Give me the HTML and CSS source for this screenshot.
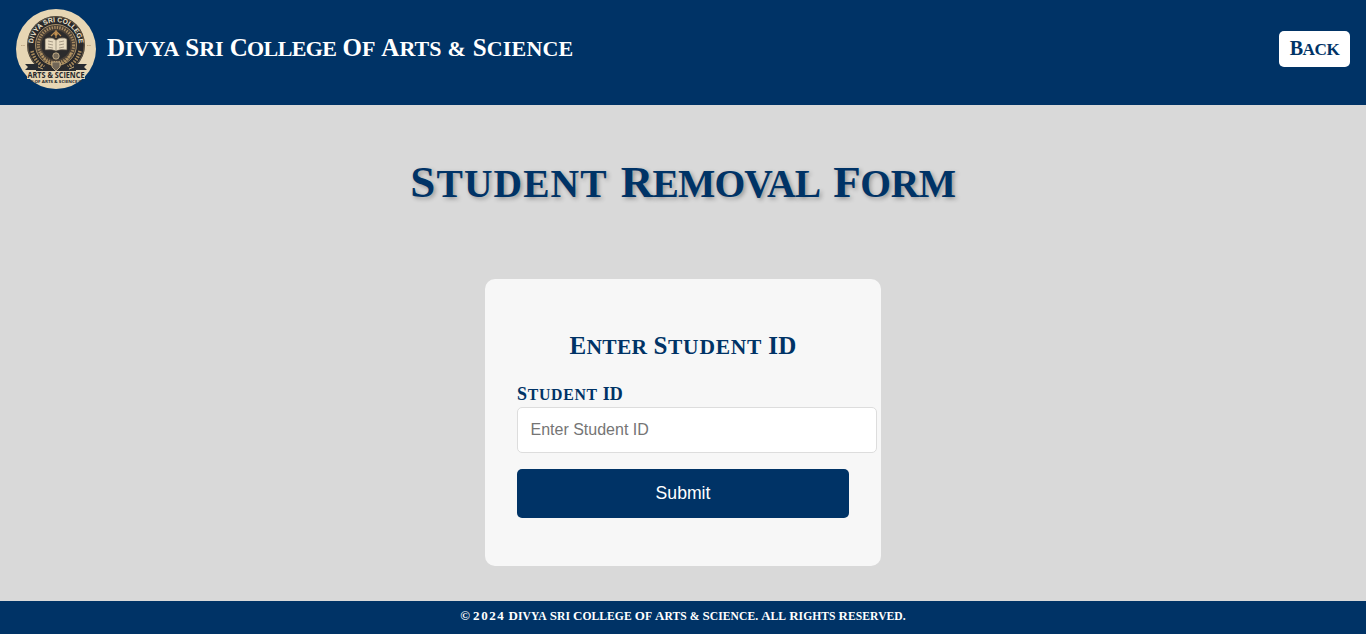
FILE: index.html
```html
<!DOCTYPE html>
<html lang="en">
<head>
<meta charset="utf-8">
<title>Student Removal Form</title>
<link rel="stylesheet" href="styles.css">
</head>
<body>
<header class="header">
  <div class="brand">
    <svg class="logo" viewBox="0 0 80 80" aria-label="College logo">
      <defs><path id="arc" d="M17.200 36a22.800 22.800 0 1 1 45.600 0"/></defs>
      <circle cx="40" cy="40" r="40" fill="#e7d6b4"/>
      <circle cx="40" cy="36" r="29" fill="#29292b"/>
      <circle cx="40" cy="36" r="20.500" fill="#4a4036" stroke="#c0a475" stroke-width=".8"/>
      <circle cx="40" cy="36" r="17.600" fill="none" stroke="#a78a60" stroke-width="3" stroke-dasharray="1.400 1.200"/>
      <circle cx="40" cy="36" r="14.500" fill="#2c2b2c"/>
      <path d="M16 42a25 25 0 0 0 12 16M64 42a25 25 0 0 1-12 16" stroke="#a98b5d" stroke-width="3.500" stroke-dasharray="1.500 1.300" fill="none"/>
      <circle cx="40" cy="36" r="28.200" fill="none" stroke="#a98b5d" stroke-width=".5"/>
      <text class="logo-arc"><textPath href="#arc" startOffset="50%">DIVYA SRI COLLEGE</textPath></text>
      <path d="M40 21v8M35 27l5-5 5 5" stroke="#b78b52" stroke-width="1.200" fill="none"/>
      <circle cx="40" cy="25" r="1.800" fill="#c59150"/>
      <path d="M29 30l2-1q6-1 9 2 3-3 9-2l2 1v11q-7-1-11 1-4-2-11-1z" fill="#e9dcc2" stroke="#51483d" stroke-width=".7"/>
      <path d="M40 31v11M32 32l5 1M32 35l5 1M32 38l5 1M48 32l-5 1M48 35l-5 1M48 38l-5 1" stroke="#8b7e6c" stroke-width=".7"/>
      <path d="M25 44q4 10 13 12M55 44q-4 10-13 12" stroke="#b29361" stroke-width="2.400" stroke-dasharray="2 1" fill="none"/>
      <circle cx="40" cy="47" r="3.200" fill="#766a59" stroke="#d6bd91" stroke-width=".8"/>
      <path d="M36 53h8v5l-4 4-4-4z" fill="#716657" stroke="#d0b78d" stroke-width=".8"/>
      <path d="M9 55h13v3h9v4H20v-1H9l3-3zM71 55H58v3h-9v4h11v-1h11l-3-3z" fill="#262a30"/>
      <path d="M22 58l5 2M58 58l-5 2" stroke="#c3a675"/>
      <path d="M11 62h58v8H11z" fill="#e7d6b4"/>
      <text class="logo-name" x="11.500" y="69.200" textLength="57" lengthAdjust="spacingAndGlyphs">ARTS &amp; SCIENCE</text>
      <text class="logo-sub" x="18.500" y="73.700" textLength="43" lengthAdjust="spacingAndGlyphs">OF ARTS &amp; SCIENCE</text>
      <path d="M14.500 72h3M62.500 72h3" stroke="#34302d"/>
      <path d="M5 36.500h4M71 36.500h4" stroke="#c0aa86" stroke-dasharray="1.600 .6"/>
    </svg>
    <div class="caps brand-name"><span>Divya</span> <span>Sri</span> <span class="w-college">College</span> <span>Of</span> <span>Arts</span> <span class="w-amp">&amp;</span> <span class="w-science">Science</span></div>
  </div>
  <a class="caps back"><span>Back</span></a>
</header>
<main class="main">
  <h1 class="caps title"><span class="w-student">Student</span> <span class="w-removal">Removal</span> <span class="w-form">Form</span></h1>
  <form class="card">
    <h2 class="caps card-title"><span>Enter</span> <span class="w-student">Student</span> <span class="full">ID</span></h2>
    <label class="caps label" for="sid"><span class="w-student">Student</span> <span class="full">ID</span></label>
    <input class="input" id="sid" type="text" placeholder="Enter Student ID">
    <button class="submit" type="button">Submit</button>
  </form>
</main>
<footer class="footer">
  <p class="caps copy"><span>©</span> <span class="full year">2024</span> <span>Divya</span> <span>Sri</span> <span>College</span> <span>Of</span> <span>Arts</span> <span>&amp;</span> <span>Science.</span> <span>All</span> <span>Rights</span> <span>Reserved.</span></p>
</footer>
</body>
</html>
```

FILE: styles.css
```css
body {
  margin: 0;
  height: 634px;
  display: flex;
  flex-direction: column;
  background: #d9d9d9;
  font-family: "Liberation Sans", Arial, sans-serif;
  overflow: hidden;
}

/* Capitals with tall small caps: every word starts with a larger letter */
.caps {
  display: flex;
  align-items: baseline;
  margin: 0;
  font-family: "Liberation Serif", "Times New Roman", serif;
  font-weight: 700;
  text-transform: uppercase;
  white-space: nowrap;
  color: #003366;
}
.caps span { display: block; }
.caps span::first-letter,
.caps .full { font-size: var(--cap); }

.header {
  box-sizing: border-box;
  height: 105px;
  flex: none;
  display: flex;
  justify-content: space-between;
  align-items: flex-start;
  padding: 9px 16px 0;
  background: #003366;
}
.brand { display: flex; align-items: flex-start; gap: 11px; }
.logo { width: 80px; height: 80px; display: block; overflow: visible; }
.logo-arc {
  font: 700 6.800px "Liberation Sans", sans-serif;
  fill: #f0e5cf;
  text-anchor: middle;
}
.logo-name { font: 700 9px "Open Sans", sans-serif; fill: #25272b; }
.logo-sub { font: 700 4px "Open Sans", sans-serif; fill: #25272b; }
.brand-name {
  --cap: 25px;
  font-size: 22px;
  line-height: 30px;
  gap: 6px;
  padding-top: 24px;
  color: #fff;
}
.brand-name .w-college { letter-spacing: -.6px; }
.brand-name .w-amp { letter-spacing: 1px; }
.brand-name .w-science { letter-spacing: .15px; }
.back {
  --cap: 20px;
  box-sizing: border-box;
  width: 71px;
  height: 36px;
  margin-top: 22px;
  justify-content: center;
  border-radius: 5px;
  background: #fff;
  font-size: 17.200px;
  line-height: 34px;
  letter-spacing: -.5px;
}

.main {
  flex: 1;
  display: flex;
  flex-direction: column;
  align-items: center;
}
.title {
  --cap: 45px;
  height: 60px;
  margin-top: 47px;
  font-size: 39.500px;
  line-height: 60px;
  gap: 13px;
  text-shadow: 2px 2px 4px rgba(0, 0, 0, .3);
}
.title .w-student { letter-spacing: 1.100px; }
.title .w-removal { letter-spacing: -.8px; }
.title .w-form { letter-spacing: -.4px; }
.card {
  box-sizing: border-box;
  width: 396px;
  height: 287px;
  margin-top: 67px;
  padding: 51px 32px 0;
  border-radius: 10px;
  background: #f7f7f7;
}
.card-title {
  --cap: 25px;
  height: 32px;
  justify-content: center;
  font-size: 21.500px;
  line-height: 32px;
  gap: 6px;
  letter-spacing: .3px;
}
.card-title .w-student { letter-spacing: .75px; }
.label {
  --cap: 18px;
  height: 25px;
  margin-top: 20px;
  font-size: 15.800px;
  line-height: 24px;
  gap: 5px;
}
.label .w-student { letter-spacing: .7px; }
.input {
  display: block;
  box-sizing: border-box;
  width: 360px;
  height: 46px;
  padding: 0 12.500px;
  border: 1px solid #ddd;
  border-radius: 5px;
  background: #fff;
  font: 16px "Liberation Sans", Arial, sans-serif;
}
.input::placeholder { color: #757575; }
.submit {
  display: block;
  width: 332px;
  height: 49px;
  margin-top: 16px;
  padding: 0;
  border: 0;
  border-radius: 5px;
  background: #003366;
  color: #fff;
  font: 17.600px "Liberation Sans", Arial, sans-serif;
}
.footer {
  flex: none;
  height: 33px;
  display: flex;
  justify-content: center;
  background: #003366;
}
.copy {
  --cap: 13px;
  padding-top: 5px;
  font-size: 11.600px;
  line-height: 20px;
  gap: 3px;
  letter-spacing: .05px;
  color: #fff;
}
.copy .year { letter-spacing: 1.600px; }
```
